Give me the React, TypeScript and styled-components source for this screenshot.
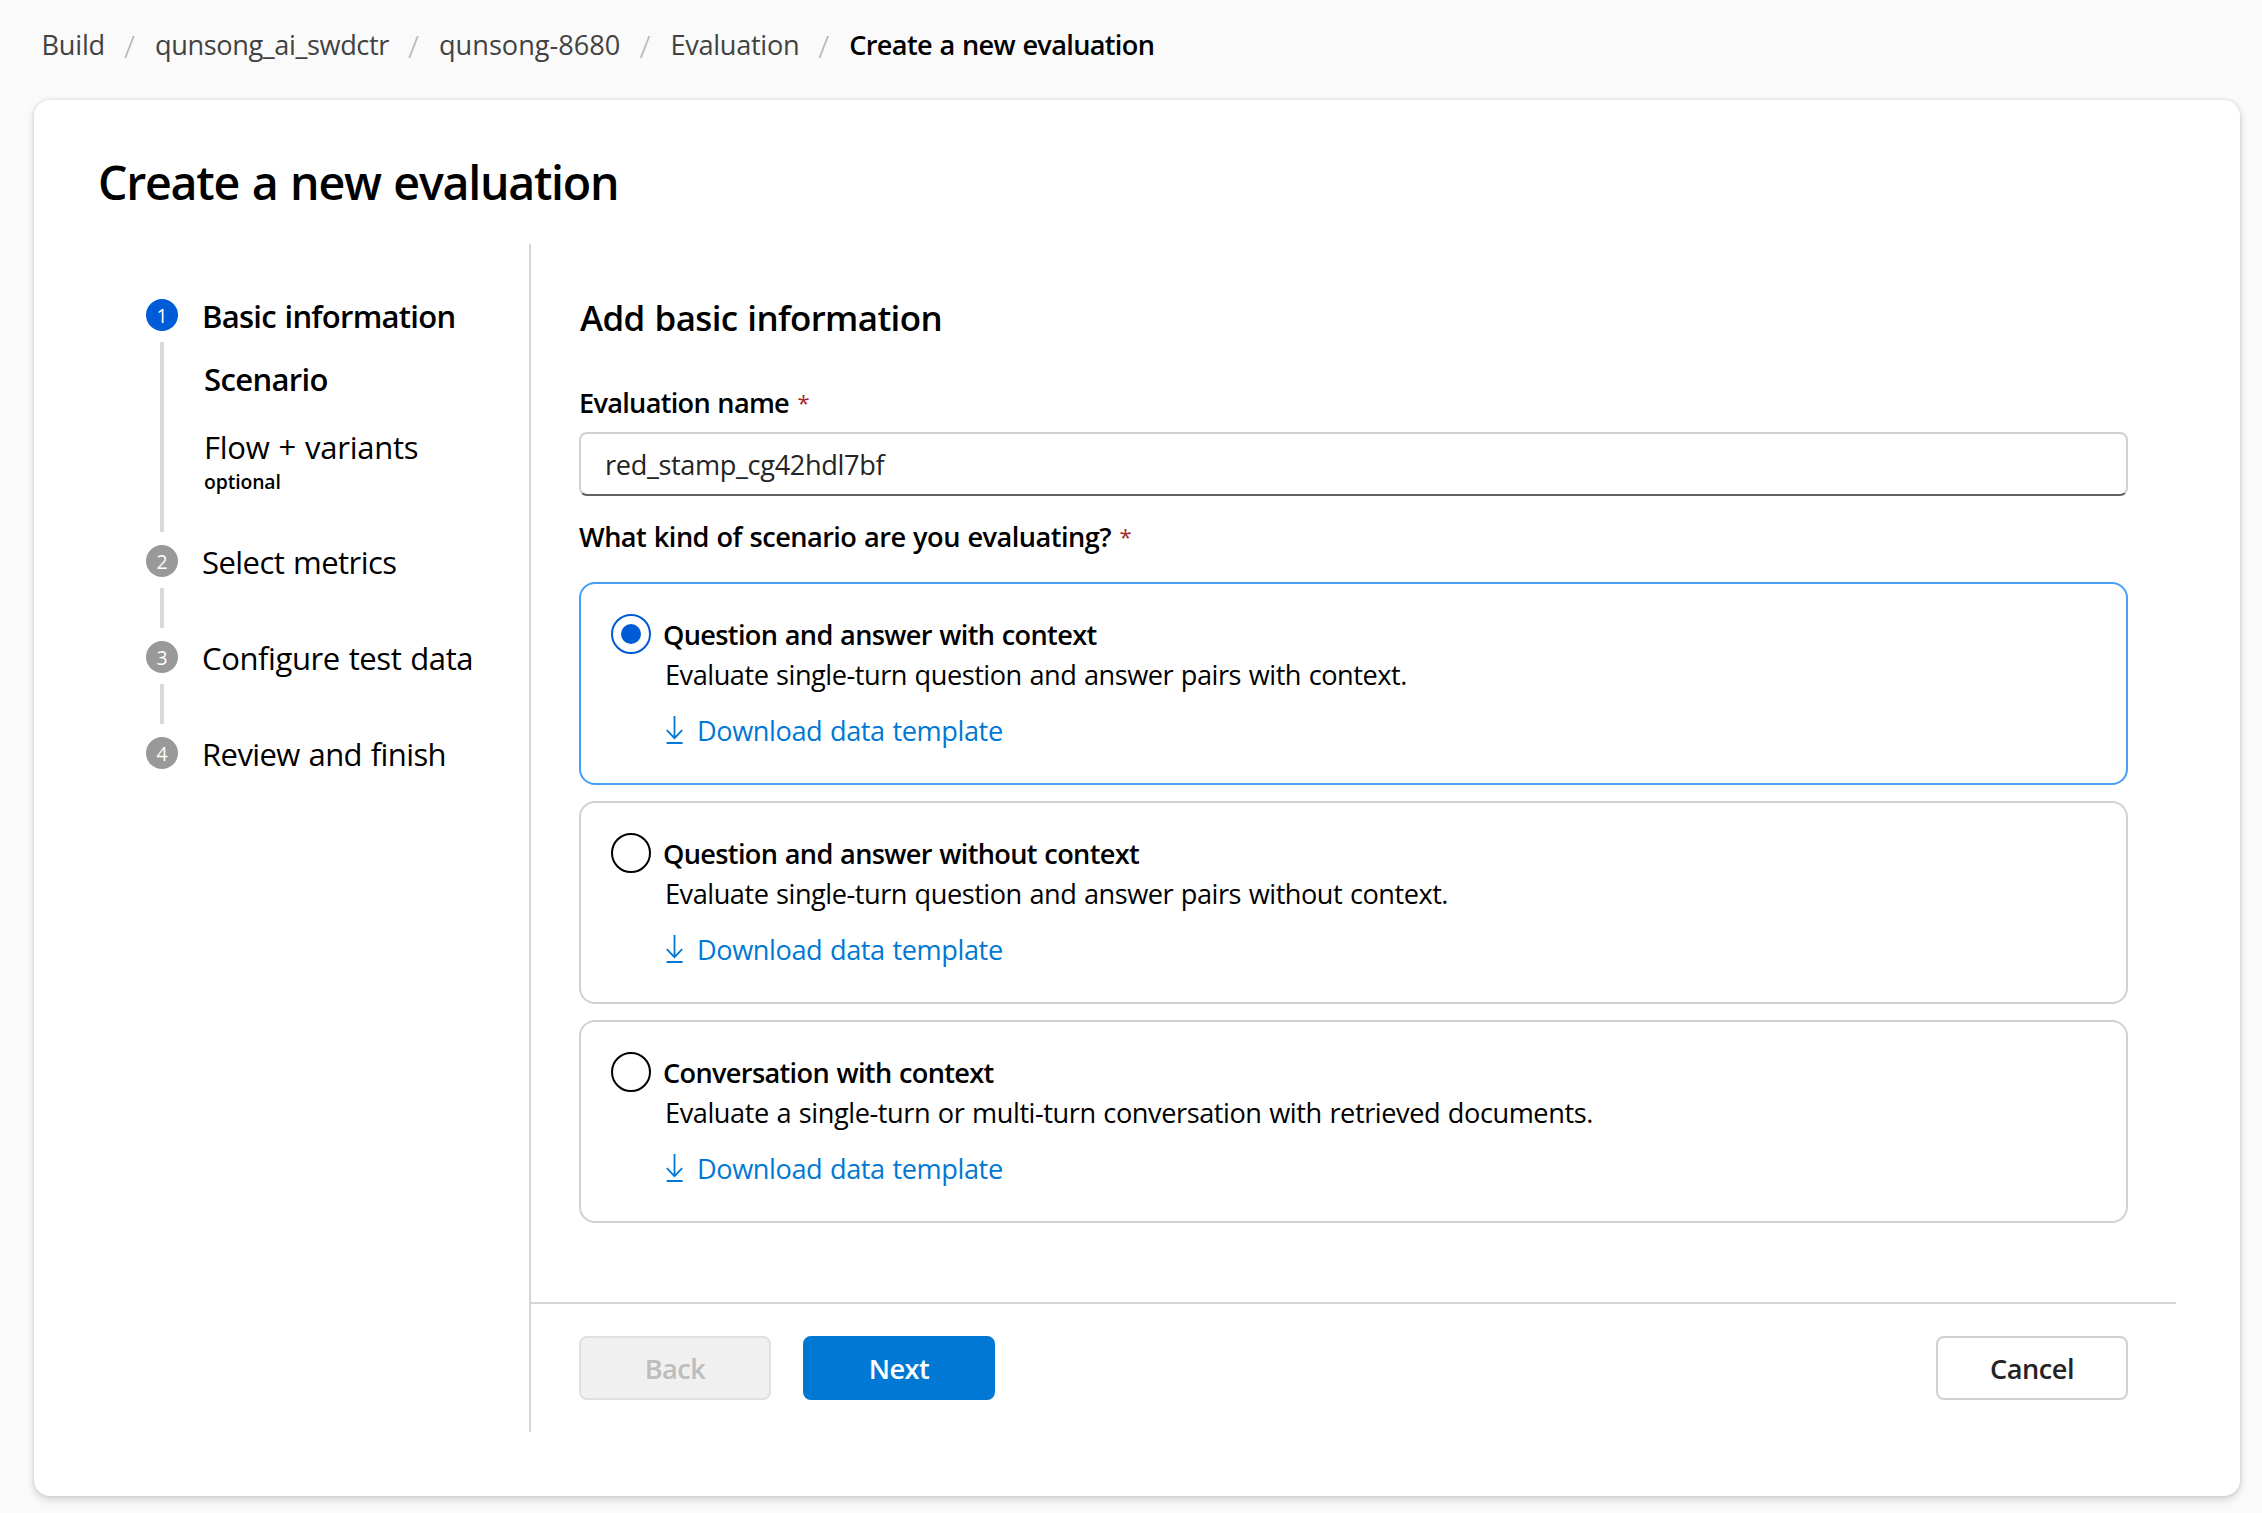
import React, { useState } from "react";
import styled, { createGlobalStyle } from "styled-components";

const GlobalStyle = createGlobalStyle`
  * { box-sizing: border-box; }
  body {
    margin: 0;
    background: #fafafa;
    color: #000;
    font-family: "Open Sans", "Noto Sans", sans-serif;
  }
`;

const Page = styled.div`
  display: flex;
  flex-direction: column;
  height: 1513px;
  overflow: hidden;
  background: #fafafa;
`;

const Text = styled.span<{ $tracking?: number }>`
  font-size: 27.16px;
  line-height: 39px;
  white-space: nowrap;
  word-spacing: 0.04em;
  letter-spacing: ${(p) => p.$tracking ?? 0}px;
`;

const Breadcrumbs = styled.nav`
  display: flex;
  flex: none;
  height: 100px;
  padding: 25px 0 0 41.5px;
`;

const Crumb = styled(Text)<{ $current?: boolean }>`
  color: ${(p) => (p.$current ? "#000" : "#424242")};
  font-weight: ${(p) => (p.$current ? 600 : 400)};
`;

const Slash = styled.span`
  width: 12px;
  margin: 2px 19px 0 19px;
  font-size: 32px;
  font-weight: 300;
  line-height: 37px;
  color: #b3b3b3;
`;

const Card = styled.main`
  display: flex;
  flex-direction: column;
  flex: none;
  height: 1396px;
  margin: 0 22px 0 34px;
  padding: 50px 64px 64px;
  border-radius: 16px;
  background: #fff;
  box-shadow: 0 0 4px rgba(0, 0, 0, 0.12), 0 4px 8px rgba(0, 0, 0, 0.14);
`;

const Title = styled.h1`
  margin: 0 0 30px;
  font-size: 46.56px;
  font-weight: 600;
  line-height: 64px;
  letter-spacing: -1.27px;
  word-spacing: 0.04em;
`;

const Body = styled.div`
  display: flex;
  flex: 1;
`;

const Stepper = styled.ol`
  width: 433px;
  margin: 0;
  padding: 55px 0 0 48px;
  list-style: none;
  border-right: 2px solid #d4d4d4;
`;

const Step = styled.li<{ $height: number }>`
  display: flex;
  gap: 24px;
  height: ${(p) => p.$height}px;
`;

const Rail = styled.div`
  display: flex;
  flex-direction: column;
  align-items: center;
  width: 32px;
`;

const Dot = styled.div<{ $active?: boolean }>`
  display: flex;
  flex: none;
  align-items: center;
  justify-content: center;
  width: 32px;
  height: 32px;
  border-radius: 50%;
  background: ${(p) => (p.$active ? "#005bd7" : "#999")};
  color: #fff;
  font-size: 19.4px;
  line-height: 27px;
`;

const Connector = styled.div`
  flex: 1;
  width: 4px;
  margin: 11px 0 13px;
  background: #d9d9d9;
`;

const StepText = styled.div`
  display: flex;
  flex-direction: column;
  margin-top: -4px;
`;

const StepLabel = styled(Text)<{ $bold?: boolean }>`
  font-size: 31.04px;
  line-height: 42px;
  font-weight: ${(p) => (p.$bold ? 600 : 400)};
`;

const SubSteps = styled.div`
  display: flex;
  flex-direction: column;
  gap: 26px;
  padding: 21px 0 0 2px;
`;

const SubStep = styled.div`
  display: flex;
  flex-direction: column;
`;

const Optional = styled(Text)`
  font-size: 19.4px;
  line-height: 27px;
  font-weight: 600;
`;

const Content = styled.section`
  display: flex;
  flex: 1;
  flex-direction: column;
`;

const Form = styled.div`
  display: flex;
  flex: 1;
  flex-direction: column;
  padding: 50px 48px 0;
  border-bottom: 2px solid #d4d4d4;
`;

const Heading = styled.h2`
  margin: 0 0 42px 1px;
  font-size: 34.92px;
  font-weight: 600;
  line-height: 47px;
  letter-spacing: -0.62px;
  word-spacing: 0.04em;
`;

const Label = styled(Text)`
  font-weight: 600;
`;

const Required = styled.span`
  margin-left: 8.5px;
  color: #a4262c;
  font-size: 22px;
  font-weight: 400;
  line-height: 0;
  vertical-align: 2.5px;
`;

const NameInput = styled.input`
  width: 100%;
  height: 64px;
  margin: 10px 0 21px;
  padding: 0 24px;
  border: 2px solid #d1d1d1;
  border-bottom-color: #616161;
  border-radius: 8px;
  outline: none;
  background: #fff;
  color: #242424;
  font-family: inherit;
  font-size: 27.16px;
  letter-spacing: -0.36px;
`;

const Options = styled.div`
  display: flex;
  flex-direction: column;
  gap: 16px;
  margin-top: 26px;
`;

const Option = styled.div<{ $selected: boolean }>`
  display: flex;
  gap: 12px;
  height: 203px;
  padding: 30px;
  border: 2px solid ${(p) => (p.$selected ? "#479ef5" : "#d1d1d1")};
  border-radius: 16px;
  cursor: pointer;
`;

const Radio = styled.div<{ $selected: boolean }>`
  display: flex;
  flex: none;
  align-items: center;
  justify-content: center;
  width: 40px;
  height: 40px;
  border: 2px solid ${(p) => (p.$selected ? "#005bd7" : "#000")};
  border-radius: 50%;
`;

const RadioDot = styled.div`
  width: 20px;
  height: 20px;
  border-radius: 50%;
  background: #005bd7;
`;

const OptionText = styled.div`
  display: flex;
  flex-direction: column;
  margin-top: 1px;
`;

const OptionTitle = styled(Text)`
  font-weight: 600;
`;

const Description = styled(Text)`
  margin: 1px 0 17px 2px;
`;

const DownloadLink = styled.div`
  display: flex;
  gap: 13px;
  padding-left: 2px;
  color: #0078d4;
`;

const DownloadGlyph = styled.svg`
  flex: none;
  width: 19px;
  height: 28px;
  margin-top: 5px;
`;

const Footer = styled.footer`
  display: flex;
  gap: 32px;
  height: 128px;
  padding: 32px 48px;
`;

const variants = {
  disabled: { bg: "#f0f0f0", border: "#e0e0e0", color: "#bdbdbd" },
  primary: { bg: "#0078d4", border: "#0078d4", color: "#fff" },
  outline: { bg: "#fff", border: "#d1d1d1", color: "#242424" },
};

const Button = styled.button<{ $variant: keyof typeof variants; $end?: boolean }>`
  width: 192px;
  height: 64px;
  margin-left: ${(p) => (p.$end ? "auto" : 0)};
  padding: 0;
  border: 2px solid ${(p) => variants[p.$variant].border};
  border-radius: 8px;
  background: ${(p) => variants[p.$variant].bg};
  color: ${(p) => variants[p.$variant].color};
  font-family: inherit;
  font-size: 27.16px;
  font-weight: 600;
  line-height: 39px;
  letter-spacing: -0.5px;
`;

const crumbs = [
  { text: "Build", tracking: -0.2 },
  { text: "qunsong_ai_swdctr", tracking: -0.4 },
  { text: "qunsong-8680", tracking: 0 },
  { text: "Evaluation", tracking: -0.3 },
  { text: "Create a new evaluation", tracking: -0.68 },
];

const laterSteps = [
  { text: "Select metrics", tracking: -0.56 },
  { text: "Configure test data", tracking: -0.41 },
  { text: "Review and finish", tracking: -0.6 },
];

const scenarios = [
  {
    title: "Question and answer with context",
    description: "Evaluate single-turn question and answer pairs with context.",
    tracking: -0.48,
  },
  {
    title: "Question and answer without context",
    description: "Evaluate single-turn question and answer pairs without context.",
    tracking: -0.48,
  },
  {
    title: "Conversation with context",
    description: "Evaluate a single-turn or multi-turn conversation with retrieved documents.",
    tracking: -0.44,
  },
];

function DownloadIcon() {
  return (
    <DownloadGlyph viewBox="0 0 19 28" fill="none" stroke="currentColor" strokeWidth="1.8">
      <path d="M9.5 0v22M1.8 14.2l7.7 7.9 7.7-7.9" />
      <path d="M1.6 27h16" strokeWidth="2" />
    </DownloadGlyph>
  );
}

export default function App() {
  const [name, setName] = useState("red_stamp_cg42hdl7bf");
  const [selected, setSelected] = useState(0);

  return (
    <Page>
      <GlobalStyle />
      <Breadcrumbs>
        {crumbs.map((crumb, i) => (
          <React.Fragment key={crumb.text}>
            {i > 0 && <Slash>/</Slash>}
            <Crumb $current={i === crumbs.length - 1} $tracking={crumb.tracking}>
              {crumb.text}
            </Crumb>
          </React.Fragment>
        ))}
      </Breadcrumbs>
      <Card>
        <Title>Create a new evaluation</Title>
        <Body>
          <Stepper>
            <Step $height={246}>
              <Rail>
                <Dot $active>1</Dot>
                <Connector />
              </Rail>
              <StepText>
                <StepLabel $bold $tracking={-0.74}>Basic information</StepLabel>
                <SubSteps>
                  <StepLabel $bold $tracking={-0.65}>Scenario</StepLabel>
                  <SubStep>
                    <StepLabel $tracking={-0.27}>Flow + variants</StepLabel>
                    <Optional $tracking={-0.13}>optional</Optional>
                  </SubStep>
                </SubSteps>
              </StepText>
            </Step>
            {laterSteps.map((step, i) => (
              <Step key={step.text} $height={96}>
                <Rail>
                  <Dot>{i + 2}</Dot>
                  {i < laterSteps.length - 1 && <Connector />}
                </Rail>
                <StepText>
                  <StepLabel $tracking={step.tracking}>{step.text}</StepLabel>
                </StepText>
              </Step>
            ))}
          </Stepper>
          <Content>
            <Form>
              <Heading>Add basic information</Heading>
              <Label $tracking={-0.72}>
                Evaluation name<Required>*</Required>
              </Label>
              <NameInput value={name} onChange={(e) => setName(e.target.value)} />
              <Label $tracking={-0.54}>
                What kind of scenario are you evaluating?<Required>*</Required>
              </Label>
              <Options>
                {scenarios.map((scenario, i) => (
                  <Option key={scenario.title} $selected={i === selected} onClick={() => setSelected(i)}>
                    <Radio $selected={i === selected}>{i === selected && <RadioDot />}</Radio>
                    <OptionText>
                      <OptionTitle $tracking={-0.67}>{scenario.title}</OptionTitle>
                      <Description $tracking={scenario.tracking}>{scenario.description}</Description>
                      <DownloadLink>
                        <DownloadIcon />
                        <Text $tracking={-0.42}>Download data template</Text>
                      </DownloadLink>
                    </OptionText>
                  </Option>
                ))}
              </Options>
            </Form>
            <Footer>
              <Button $variant="disabled" disabled>Back</Button>
              <Button $variant="primary">Next</Button>
              <Button $variant="outline" $end>Cancel</Button>
            </Footer>
          </Content>
        </Body>
      </Card>
    </Page>
  );
}
